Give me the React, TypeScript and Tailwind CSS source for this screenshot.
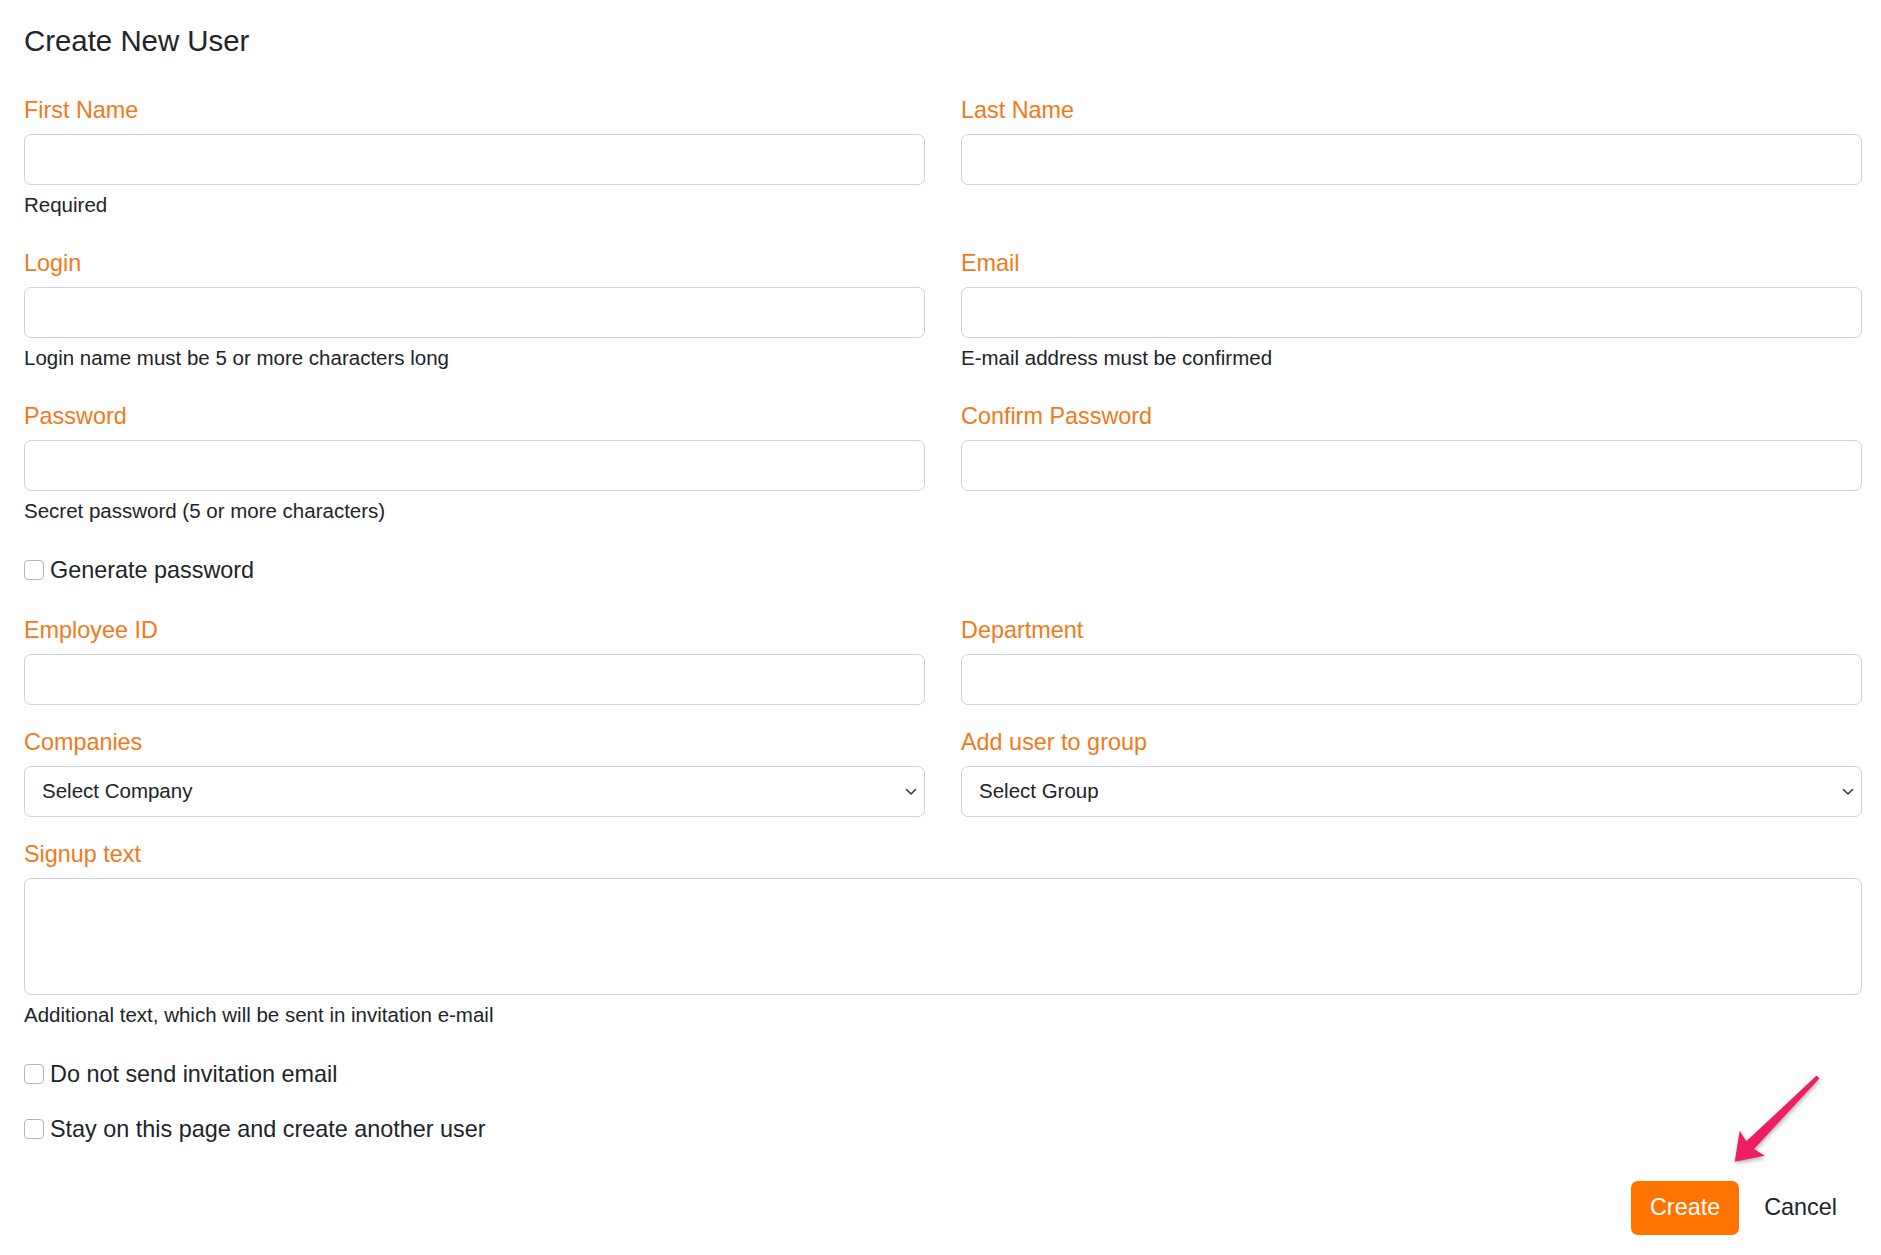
import type { ReactNode } from "react";

const labelClassName = "block h-[34px] text-[23.4px] leading-[34px] text-[#f07a1a]";
const inputClassName =
  "mt-[7px] block h-[51px] w-full rounded-[7px] border border-[#cfd3d7] bg-white px-[17px] text-[20.5px] outline-none";
const helpClassName = "mt-[5px] text-[20.5px] leading-[30px] text-[#212529]";

function Field({ label, help, children }: { label: string; help?: string; children?: ReactNode }) {
  return (
    <div>
      <label className={labelClassName}>{label}</label>
      {children ?? <input type="text" className={inputClassName} />}
      {help && <div className={helpClassName}>{help}</div>}
    </div>
  );
}

function SelectBox({ placeholder }: { placeholder: string }) {
  return (
    <div className="relative mt-[7px]">
      <select className="block h-[51px] w-full appearance-none rounded-[7px] border border-[#cfd3d7] bg-white pl-[17px] pr-[40px] text-[20.5px] text-[#212529] outline-none">
        <option>{placeholder}</option>
      </select>
      <svg
        aria-hidden
        viewBox="0 0 12 8"
        className="pointer-events-none absolute right-[8px] top-1/2 h-[8px] w-[12px] -translate-y-1/2"
      >
        <path d="M1.5 1.5 6 6l4.5-4.5" fill="none" stroke="#343a40" strokeWidth="1.6" strokeLinecap="round" strokeLinejoin="round" />
      </svg>
    </div>
  );
}

function Check({ label, className }: { label: string; className: string }) {
  return (
    <label className={`flex h-[34px] items-center gap-[6px] text-[23.4px] leading-[34px] ${className}`}>
      <input
        type="checkbox"
        className="h-[20px] w-[20px] shrink-0 appearance-none rounded-[4px] border border-[#b4b9be] bg-white"
      />
      <span>{label}</span>
    </label>
  );
}

export default function App() {
  return (
    <div className="min-h-screen bg-white pb-[19px] pl-[24px] pr-[19px] pt-[23px] font-['Liberation_Sans',Arial,sans-serif] text-[#212529]">
      <h1 className="text-[29.4px] leading-[36px]">Create New User</h1>

      <div className="mt-[34px] grid grid-cols-2 gap-x-[36px]">
        <Field label="First Name" help="Required" />
        <Field label="Last Name" />
      </div>

      <div className="mt-[26px] grid grid-cols-2 gap-x-[36px]">
        <Field label="Login" help="Login name must be 5 or more characters long" />
        <Field label="Email" help="E-mail address must be confirmed" />
      </div>

      <div className="mt-[26px] grid grid-cols-2 gap-x-[36px]">
        <Field label="Password" help="Secret password (5 or more characters)" />
        <Field label="Confirm Password" />
      </div>

      <Check label="Generate password" className="mt-[27px]" />

      <div className="mt-[26px] grid grid-cols-2 gap-x-[36px]">
        <Field label="Employee ID" />
        <Field label="Department" />
      </div>

      <div className="mt-[20px] grid grid-cols-2 gap-x-[36px]">
        <Field label="Companies">
          <SelectBox placeholder="Select Company" />
        </Field>
        <Field label="Add user to group">
          <SelectBox placeholder="Select Group" />
        </Field>
      </div>

      <div className="mt-[20px]">
        <Field label="Signup text" help="Additional text, which will be sent in invitation e-mail">
          <textarea className="mt-[7px] block h-[117px] w-full resize-none rounded-[7px] border border-[#cfd3d7] bg-white px-[17px] py-[8px] text-[20.5px] outline-none" />
        </Field>
      </div>

      <Check label="Do not send invitation email" className="mt-[27px]" />
      <Check label="Stay on this page and create another user" className="mt-[21px]" />

      <div className="mt-[35px] flex items-center justify-end">
        <div className="relative">
          <button className="h-[54px] rounded-[7px] bg-[#ff7300] px-[19px] text-[23.4px] text-white">Create</button>
          {/* pointer arrow drawn over the Create button */}
          <svg
            aria-hidden
            viewBox="0 0 110 100"
            className="pointer-events-none absolute left-[87px] top-[-112px] h-[100px] w-[110px] drop-shadow-[1px_2px_2px_rgba(0,0,0,0.3)]"
          >
            <polygon
              points="16.7,92.7 21.7,61.7 28.3,72.3 98.6,6.6 101.4,9.4 36,80 46.7,86.7"
              fill="#ef1d61"
            />
          </svg>
        </div>
        <button className="h-[54px] px-[25px] text-[23.4px] text-[#212529]">Cancel</button>
      </div>
    </div>
  );
}
